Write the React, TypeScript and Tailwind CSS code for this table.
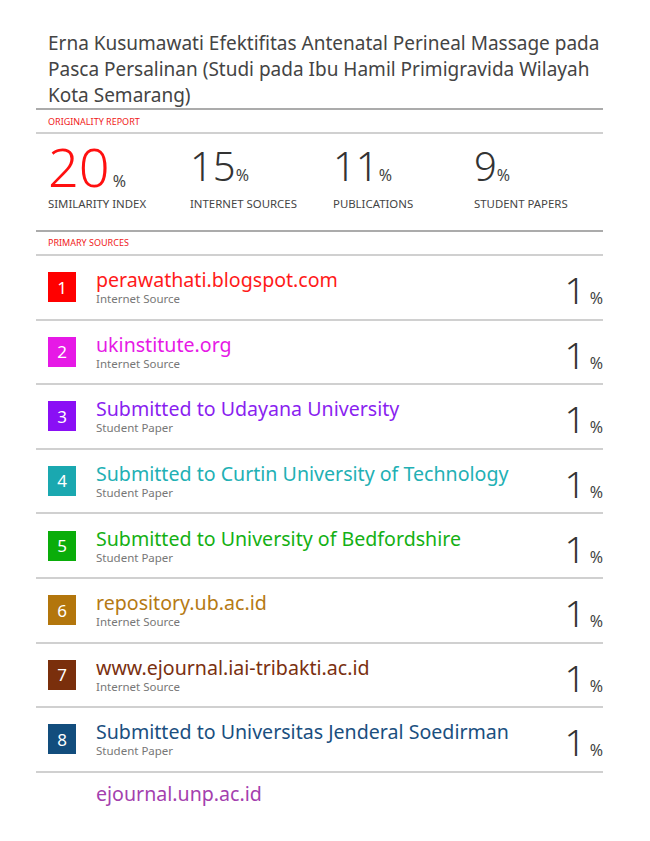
const sources = [
  { n: 1, name: 'perawathati.blogspot.com', kind: 'Internet Source', badge: 'bg-[#ff0000]', text: 'text-[#ff1a1a]' },
  { n: 2, name: 'ukinstitute.org', kind: 'Internet Source', badge: 'bg-[#e619e6]', text: 'text-[#e619e6]' },
  { n: 3, name: 'Submitted to Udayana University', kind: 'Student Paper', badge: 'bg-[#8a0ff5]', text: 'text-[#8a1ff0]' },
  { n: 4, name: 'Submitted to Curtin University of Technology', kind: 'Student Paper', badge: 'bg-[#1aa8b0]', text: 'text-[#22b0b4]' },
  { n: 5, name: 'Submitted to University of Bedfordshire', kind: 'Student Paper', badge: 'bg-[#0aad0a]', text: 'text-[#14b014]' },
  { n: 6, name: 'repository.ub.ac.id', kind: 'Internet Source', badge: 'bg-[#b3760c]', text: 'text-[#b57a14]' },
  { n: 7, name: 'www.ejournal.iai-tribakti.ac.id', kind: 'Internet Source', badge: 'bg-[#7a2f0c]', text: 'text-[#7a3010]' },
  { n: 8, name: 'Submitted to Universitas Jenderal Soedirman', kind: 'Student Paper', badge: 'bg-[#124d7d]', text: 'text-[#1a4f80]' },
];

const stats = [
  { value: '15', label: 'INTERNET SOURCES' },
  { value: '11', label: 'PUBLICATIONS' },
  { value: '9', label: 'STUDENT PAPERS' },
];

export default function App() {
  return (
    <div className="w-[650px] h-[841px] overflow-hidden bg-white font-['Noto_Sans',sans-serif] pl-[36px] pr-[47px]">
      {/* Title */}
      <div className="pt-[30px] pl-3 text-[19px] leading-[26px] text-[#444]">
        Erna Kusumawati Efektifitas Antenatal Perineal Massage pada Pasca Persalinan (Studi pada Ibu Hamil Primigravida Wilayah Kota Semarang)
      </div>

      <div className="border-b-2 border-[#ababab]" />
      <div className="h-[22px] pl-3 pt-[2px] flex items-center text-[9px] text-[#f02020]">ORIGINALITY REPORT</div>
      <div className="border-b-2 border-[#d0d0d0]" />

      {/* Stats */}
      <div className="h-[96px] pl-3 grid grid-cols-[142px_143px_141px_1fr]">
        <div className="flex flex-col">
          <div className="flex items-baseline text-[#ff1010] mt-[2px] h-[60px]">
            <div className="text-[54px] leading-[60px] font-light">20</div>
            <div className="text-[16px] leading-none ml-[3px] text-[#444]">%</div>
          </div>
          <div className="text-[11.4px] leading-[16px] text-[#444]">SIMILARITY INDEX</div>
        </div>
        {stats.map((s) => (
          <div key={s.label} className="flex flex-col">
            <div className="flex items-baseline text-[#333] mt-[2px] h-[60px]">
              <div className="text-[40px] leading-[60px] font-light">{s.value}</div>
              <div className="text-[16px] leading-none text-[#444]">%</div>
            </div>
            <div className="text-[11.4px] leading-[16px] text-[#444]">{s.label}</div>
          </div>
        ))}
      </div>

      <div className="border-b-2 border-[#ababab]" />
      <div className="h-[22px] pl-3 flex items-center text-[9px] text-[#f02020]">PRIMARY SOURCES</div>
      <div className="border-b-2 border-[#d0d0d0]" />

      {/* Sources */}
      {sources.map((s) => (
        <div key={s.n} className="h-[64.6px] pl-3 flex items-center border-b-2 border-[#d0d0d0]">
          <div className={`${s.badge} w-[28px] h-[30px] flex items-center justify-center text-white text-[17px]`}>
            {s.n}
          </div>
          <div className="ml-[20px] flex-1 flex flex-col">
            <div className={`${s.text} text-[19.6px] leading-[24px]`}>{s.name}</div>
            <div className="text-[11.5px] leading-[14px] text-[#777]">{s.kind}</div>
          </div>
          <div className="flex items-baseline text-[#333] pt-[6px]">
            <div className="text-[37px] leading-[40px] font-light">1</div>
            <div className="text-[16px] leading-none ml-[4px] text-[#444]">%</div>
          </div>
        </div>
      ))}

      <div className="pl-[60px] pt-[6px] text-[19.6px] text-[#a43fae]">ejournal.unp.ac.id</div>
    </div>
  );
}
